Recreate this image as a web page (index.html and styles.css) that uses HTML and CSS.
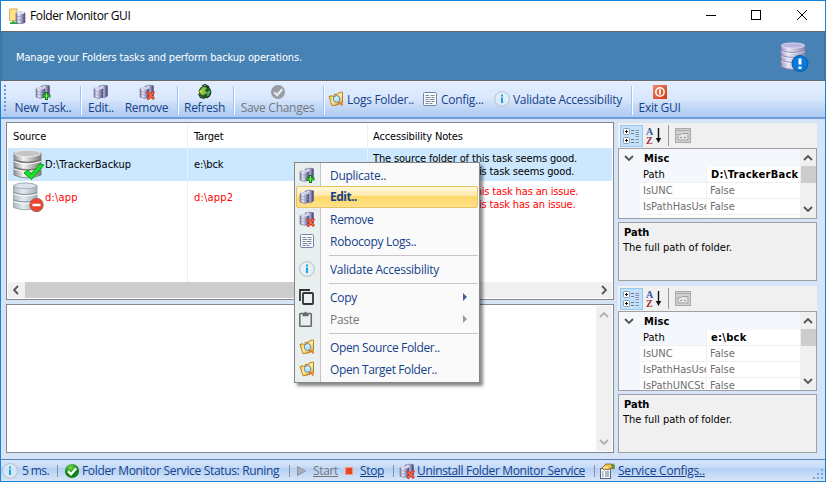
FILE: index.html
```html
<!DOCTYPE html>
<html lang="en">
<head>
<meta charset="utf-8">
<title>Folder Monitor GUI</title>
<link rel="stylesheet" href="styles.css">
</head>
<body>
<svg class="defs" width="0" height="0" aria-hidden="true">
  <defs>
    <linearGradient id="cyl" x1="0" x2="1" y1="0" y2="0"><stop offset="0" stop-color="#77779f"/><stop offset=".3" stop-color="#eeeefa"/><stop offset=".65" stop-color="#9999c0"/><stop offset="1" stop-color="#36366b"/></linearGradient>
    <linearGradient id="lilac" x1="0" x2="1" y1="0" y2="0"><stop offset="0" stop-color="#9c97bd"/><stop offset=".3" stop-color="#e9e6f8"/><stop offset="1" stop-color="#8985b0"/></linearGradient>
    <linearGradient id="grey" x1="0" x2="1" y1="0" y2="0"><stop offset="0" stop-color="#909090"/><stop offset=".35" stop-color="#f2f2f2"/><stop offset="1" stop-color="#7c7c7c"/></linearGradient>
    <linearGradient id="pale" x1="0" x2="1" y1="0" y2="0"><stop offset="0" stop-color="#b0bac4"/><stop offset=".4" stop-color="#e4eaf0"/><stop offset="1" stop-color="#a5b0bc"/></linearGradient>
    <radialGradient id="green" cx=".4" cy=".25"><stop offset="0" stop-color="#72d84c"/><stop offset="1" stop-color="#128016"/></radialGradient>
    <linearGradient id="red" x1="0" x2="1" y1="0" y2="1"><stop offset="0" stop-color="#f08a68"/><stop offset="1" stop-color="#d43309"/></linearGradient>
    <linearGradient id="gold" x1="0" x2="1" y1="0" y2="1"><stop offset="0" stop-color="#f0bd3c"/><stop offset=".5" stop-color="#ffefa8"/><stop offset="1" stop-color="#dca02a"/></linearGradient>
  </defs>
  <symbol id="db" viewBox="0 0 16 16">
    <path d="M6 2.2Q10 .4 14.5 1.8V12Q12 14.5 8 13.5Z" fill="url(#cyl)" stroke="#62628c" stroke-width=".6"/>
    <path d="M1 4.4Q5.5 2.6 10 4.4V13Q5.5 15.8 1 13Z" fill="url(#cyl)" stroke="#6c6c96" stroke-width=".6"/>
    <ellipse cx="5.5" cy="4.3" rx="4.3" ry="1.2" fill="#d5d5ec"/>
    <path d="M1.2 7.3Q5.5 9 9.8 7.3M1.2 10.2Q5.5 12 9.8 10.2" fill="none" stroke="#8c8cb4" stroke-width=".6"/>
  </symbol>
  <symbol id="db-add" viewBox="0 0 16 16"><use href="#db"/><path d="M10 8h3v2.5h2.5v3H13V16h-3v-2.5H7.5v-3H10z" fill="#087a08"/><path d="M11.500 9v6M8.500 12h6" stroke="#7cf05c" stroke-width="1.2"/></symbol>
  <symbol id="db-del" viewBox="0 0 16 16"><use href="#db"/><path d="M8 8l7 7M15 7.5L8.5 15.5" stroke="#b92710" stroke-width="2.7"/><path d="M8.4 8.4l6.2 6.2M14.6 8L8.9 15" stroke="#ff6848" stroke-width="1.4"/></symbol>
  <symbol id="info" viewBox="0 0 16 16"><circle cx="8" cy="8" r="7.4" fill="#e8eff5" fill-opacity=".6" stroke="#b3c0ca"/><path d="M7 6.5h2V12H7zM7 3.5h2v2H7z" fill="#12a5ea"/></symbol>
  <symbol id="doc" viewBox="0 0 16 16"><rect x="1.5" y="1.5" width="13" height="13" rx="1" fill="#f8fafe" stroke="#7086a8"/><path d="M3.5 4.5h3.5M8.5 4.5h4M3.5 6.5h5M9.5 6.5h3M3.5 8.5h3M7.5 8.5h5M3.5 10.5h5M9.5 10.5h3M3.5 12.5h3M7.5 12.5h3" stroke="#7d8798"/></symbol>
  <symbol id="search" viewBox="0 0 16 16"><path d="M6 3.500L10 3l1-1.500 3.500-.5V12L7 14z" fill="url(#gold)" stroke="#b07a10" stroke-width=".9"/><path d="M1 5.500l3-.8 1 1 4.500-.7 1 8.500L4 14.800z" fill="url(#gold)" stroke="#b07a10" stroke-width=".9"/><circle cx="8.600" cy="8" r="3.300" fill="#b5e8fb" stroke="#6f87a8"/><path d="M7 7.400q.8-1.600 2.400-1.300" stroke="#fff" fill="none"/><path d="M11.200 10.800l3.300 3.700" stroke="#e6762c" stroke-width="1.800"/></symbol>
  <symbol id="check" viewBox="0 0 16 16"><circle cx="8" cy="8" r="7.1" fill="url(#green)"/><path d="M4 8.2l3 3 5.2-6" fill="none" stroke="#fff" stroke-width="2.3"/></symbol>
  <symbol id="check-off" viewBox="0 0 16 16"><circle cx="8" cy="8" r="7" fill="#999ca0"/><path d="M4.2 8.2l3 3 5-6" fill="none" stroke="#e8edf5" stroke-width="2.2"/></symbol>
  <symbol id="globe" viewBox="0 0 16 16"><circle cx="8" cy="8" r="6.2" fill="#26521e"/><path d="M3 6l3-3 4 .5-2 3 2 2-4 3-3-2z" fill="#7fc94a"/><path d="M9 9l4-3 .5 4-3 3z" fill="#4f9c55"/><path d="M5 1.8L8 .5l3.5 2-2 1M14 8l-1.5 4-3 2M1.5 10l2 3.5 4 1" fill="none" stroke="#102d14" stroke-width="1.1"/><path d="M1.5 8l3-2 1 2.5z" fill="#f5cf21"/><path d="M10.5 8.5l2-1 .5 2z" fill="#48bce8"/></symbol>
  <symbol id="power" viewBox="0 0 16 16"><rect x="1" y="1" width="14" height="14" fill="url(#red)"/><circle cx="8" cy="8" r="4.2" fill="none" stroke="#fff" stroke-width="1.5"/><path d="M8 5.3v5.2" stroke="#fff" stroke-width="1.7"/></symbol>
  <symbol id="copy" viewBox="0 0 16 16"><path d="M1 12V1h10" fill="none" stroke="#303236" stroke-width="1.8"/><rect x="4" y="4" width="10" height="11" rx=".8" fill="none" stroke="#303236" stroke-width="1.8"/></symbol>
  <symbol id="paste" viewBox="0 0 16 16"><rect x=".8" y="2.500" width="11.500" height="12.700" rx=".8" fill="none" stroke="#66696b" stroke-width="1.500"/><path d="M3.500 2h1.700q1.300-3 2.600 0h1.700v3.200h-6z" fill="#66696b"/></symbol>
  <symbol id="svc" viewBox="0 0 18 16"><rect x="1.5" y="5.5" width="10" height="10" fill="#f6f8fb" stroke="#53677d"/><path d="M3 9h1.5M6 9h4M3 11h1.5M6 11h4M3 13h1.5M6 13h4" stroke="#6d7b8c"/><path d="M3 5l4-4h5l3 2v3l-3-1-3 2-2-1-2 1z" fill="#f0c04e" stroke="#765223" stroke-width=".8"/><path d="M12 1.5l3-1 1 3.500-3 1.500z" fill="#5e9238"/><path d="M4 4.5h5" stroke="#fff2a8" stroke-width="1.2"/></symbol>
  <symbol id="chev" viewBox="0 0 10 6"><path d="M1 1l4 4 4-4" fill="none" stroke="#555" stroke-width="1.8"/></symbol>
  <symbol id="categorized" viewBox="0 0 17 16"><rect x=".5" y=".5" width="6" height="6" rx="1" fill="#fff" stroke="#8c9bb0"/><rect x=".5" y="9.500" width="6" height="6" rx="1" fill="#fff" stroke="#8c9bb0"/><path d="M2 3.500h3M3.500 2v3M2 12.500h3M3.500 11v3" stroke="#111"/><path d="M8 2.500h3M8 5.500h3M8 11.500h3M8 14.500h3" stroke="#60799b"/><path d="M12.500 2.500h3.500M12.500 4.500h3.500M12.500 6.500h3.500M12.500 8.500h3.500M12.500 11.500h3.500M12.500 14.500h3.500" stroke="#7f93ae"/></symbol>
  <symbol id="property-pages" viewBox="0 0 16 15"><rect x=".5" y=".5" width="15" height="14" fill="#d0d0d0" stroke="#a9a9a9"/><path d="M1 2.500h14" stroke="#aaa"/><path d="M3 12V6.500h3l1-1h6V12z" fill="#e4e4e4" stroke="#a3a3a3"/><path d="M5 9.500h2M9 9.500h2" stroke="#999"/></symbol>
</svg>

<div class="window">
  <header class="titlebar">
    <svg class="app-icon" viewBox="0 0 17 17"><path d="M.6 1.2L8 .8V12.6H.6z" fill="#ffe18a" stroke="#d9b251"/><path d="M4.5 13v2M1 15.2h8" stroke="#2aa33c" stroke-width="1.7"/><path d="M7 4.8Q11.5 3 16 4.8V14.5Q11.5 17 7 14.5z" fill="url(#cyl)" stroke="#606088" stroke-width=".7"/><ellipse cx="11.5" cy="4.9" rx="4.2" ry="1.2" fill="#dfdff2"/><path d="M7 8q4.500 2 9 0M7 11.200q4.500 2 9 0" fill="none" stroke="#8585aa" stroke-width=".7"/></svg>
    <span class="ui">Folder Monitor GUI</span>
    <svg class="controls" viewBox="0 0 104 12" fill="none" stroke="#000" shape-rendering="crispEdges"><path d="M0 5.500h10"/><rect x="45.500" y=".5" width="9" height="9"/><path d="M91 0l10 10M101 0L91 10" shape-rendering="auto"/></svg>
  </header>

  <section class="banner">
    <span class="tah">Manage your Folders tasks and perform backup operations.</span>
    <svg class="banner-icon" viewBox="0 0 30 32"><path d="M2 4Q14 0 26 4V26Q14 31 2 26z" fill="url(#lilac)" stroke="#77749d" stroke-width=".8"/><ellipse cx="14" cy="4.500" rx="11.700" ry="2.600" fill="#b9b5df" stroke="#e6e3f7" stroke-width=".8"/><path d="M2 9.500q12 4 24 0M2 14.500q12 4 24 0M2 19.500q12 4 24 0" fill="none" stroke="#8f8bb3"/><path d="M2 10.500q12 4 24 0M2 15.500q12 4 24 0M2 20.500q12 4 24 0" fill="none" stroke="#fff" stroke-opacity=".7" stroke-width=".7"/><circle cx="21" cy="22.500" r="8" fill="#0878dc" stroke="#075ba8"/><path d="M21 17.500v6M21 25.500v2.500" stroke="#fff" stroke-width="3"/></svg>
  </section>

  <nav class="toolbar">
    <i class="grip"></i>
    <div class="tool stacked w-new"><svg><use href="#db-add"/></svg><span class="ui">New Task..</span></div><i class="rule"></i>
    <div class="tool stacked w-edit"><svg><use href="#db"/></svg><span class="ui">Edit..</span></div>
    <div class="tool stacked w-remove"><svg><use href="#db-del"/></svg><span class="ui">Remove</span></div><i class="rule"></i>
    <div class="tool stacked w-refresh"><svg><use href="#globe"/></svg><span class="ui">Refresh</span></div><i class="rule"></i>
    <div class="tool stacked w-save off"><svg><use href="#check-off"/></svg><span class="ui">Save Changes</span></div><i class="rule"></i>
    <div class="tool w-logs"><svg><use href="#search"/></svg><span class="ui">Logs Folder..</span></div>
    <div class="tool w-config"><svg><use href="#doc"/></svg><span class="ui">Config...</span></div>
    <div class="tool w-validate"><svg><use href="#info"/></svg><span class="ui">Validate Accessibility</span></div><i class="rule"></i>
    <div class="tool stacked w-exit"><svg><use href="#power"/></svg><span class="ui">Exit GUI</span></div>
  </nav>

  <main class="content">
    <div class="left">
      <section class="tasks">
        <div class="row head tah"><span>Source</span><span>Target</span><span>Accessibility Notes</span></div>
        <div class="row selected tah">
          <span class="source"><svg class="disk" viewBox="0 0 32 32"><path d="M1 4Q14 -1 28 4V26Q14 32 1 26z" fill="url(#grey)" stroke="#777" stroke-width=".8"/><ellipse cx="14.500" cy="4.500" rx="13" ry="3.300" fill="#c5c5c5" stroke="#eee"/><path d="M1 11q13 5 27 0M1 18.500q13 5 27 0" fill="none" stroke="#777" stroke-width="1.400"/><path d="M1 12.500q13 5 27 0M1 20q13 5 27 0" fill="none" stroke="#fff"/><path d="M11 24l4-3 3 4 9-10 4 1-12.500 14.500z" fill="#19e22b" stroke="#099b19"/></svg><span class="task">D:\TrackerBackup</span></span>
          <span>e:\bck</span>
          <span class="notes"><span>The source folder of this task seems good.</span><span>The target folder of this task seems good.</span></span>
        </div>
        <div class="row failed tah">
          <span class="source"><svg class="disk" viewBox="0 0 32 32"><path d="M.500 3.500Q12 -1 24 3.500V25.500Q12 30 .500 25.500z" fill="url(#pale)" stroke="#8f9aa5" stroke-width=".8"/><ellipse cx="12.200" cy="3.800" rx="11" ry="2.800" fill="#dce4eb" stroke="#a5b0bb"/><path d="M.500 10.500q12 4 23.500 0M.500 18q12 4 23.500 0" fill="none" stroke="#85919d"/><path d="M.500 12q12 4 23.500 0M.500 19.500q12 4 23.500 0" fill="none" stroke="#fff"/><circle cx="23.500" cy="23" r="6.700" fill="#e94432" stroke="#a9645c"/><path d="M19.500 23h8" stroke="#fff" stroke-width="2.500"/></svg><span class="wide">d:\app</span></span>
          <span class="wide">d:\app2</span>
          <span class="notes"><span>The source folder of this task has an issue.</span><span>The target folder of this task has an issue.</span></span>
        </div>
        <div class="row filler"><span></span><span></span><span></span></div>
        <div class="hscroll"><svg class="chev turn-left"><use href="#chev"/></svg><i></i><svg class="chev turn-right"><use href="#chev"/></svg></div>
      </section>
      <section class="log"><div class="vscroll dim"><svg class="chev up"><use href="#chev"/></svg><svg class="chev"><use href="#chev"/></svg></div></section>
    </div>

    <aside class="right">
      <div class="pg-tools">
        <span class="cat"><svg><use href="#categorized"/></svg></span>
        <svg class="az" viewBox="0 0 16 18"><text x="0" y="8" class="az-a">A</text><text x="0" y="16.500" class="az-z">Z</text><path d="M12.500 1v11" stroke="#111" stroke-width="1.400"/><path d="M9.800 11h5.400l-2.700 5z" fill="#111"/></svg>
        <i></i>
        <svg class="pages"><use href="#property-pages"/></svg>
      </div>
      <div class="grid short tah">
        <div class="props">
          <div class="misc"><svg class="chev"><use href="#chev"/></svg><b>Misc</b></div>
          <div class="prop first"><span>Path</span><b>D:\TrackerBack</b></div>
          <div class="prop"><span>IsUNC</span><em>False</em></div>
          <div class="prop"><span>IsPathHasUser</span><em>False</em></div>
          <div class="prop"><span>IsPathUNCSt</span><em>False</em></div>
        </div>
        <div class="vscroll"><svg class="chev up"><use href="#chev"/></svg><i></i><svg class="chev"><use href="#chev"/></svg></div>
      </div>
      <div class="help tah"><b>Path</b><span>The full path of folder.</span></div>
      <div class="pg-tools second">
        <span class="cat"><svg><use href="#categorized"/></svg></span>
        <svg class="az" viewBox="0 0 16 18"><text x="0" y="8" class="az-a">A</text><text x="0" y="16.500" class="az-z">Z</text><path d="M12.500 1v11" stroke="#111" stroke-width="1.400"/><path d="M9.800 11h5.400l-2.700 5z" fill="#111"/></svg>
        <i></i>
        <svg class="pages"><use href="#property-pages"/></svg>
      </div>
      <div class="grid tall tah">
        <div class="props">
          <div class="misc"><svg class="chev"><use href="#chev"/></svg><b>Misc</b></div>
          <div class="prop first"><span>Path</span><b>e:\bck</b></div>
          <div class="prop"><span>IsUNC</span><em>False</em></div>
          <div class="prop"><span>IsPathHasUser</span><em>False</em></div>
          <div class="prop"><span>IsPathUNCSt</span><em>False</em></div>
        </div>
        <div class="vscroll"><svg class="chev up"><use href="#chev"/></svg><i></i><svg class="chev"><use href="#chev"/></svg></div>
      </div>
      <div class="help tah"><b>Path</b><span>The full path of folder.</span></div>
    </aside>
  </main>

  <footer class="status">
    <svg class="i16"><use href="#info"/></svg><span class="ui st-ms">5 ms.</span><i class="bar b1"></i>
    <svg class="i16"><use href="#check"/></svg><span class="ui st-run">Folder Monitor Service Status: Runing</span><i class="bar b2"></i>
    <svg class="play" viewBox="0 0 9 10"><path d="M.500 .500l8 4.500-8 4.500z" fill="#a9adb5" stroke="#8d939e"/></svg><span class="ui link off st-start">Start</span>
    <i class="stop"></i><span class="ui link st-stop">Stop</span><i class="bar b3"></i>
    <svg class="i16 un"><use href="#db-del"/></svg><span class="ui link st-un">Uninstall Folder Monitor Service</span><i class="bar b4"></i>
    <svg class="svc"><use href="#svc"/></svg><span class="ui link st-conf">Service Configs..</span>
    <svg class="resize" viewBox="0 0 12 12"><path d="M9 1h2v2H9zM5 5h2v2H5zM9 5h2v2H9zM1 9h2v2H1zM5 9h2v2H5zM9 9h2v2H9z" fill="#7fa5dd"/></svg>
  </footer>

  <div class="menu">
    <div class="item"><svg><use href="#db-add"/></svg><span class="ui">Duplicate..</span></div>
    <div class="item hot"><svg><use href="#db"/></svg><span class="ui">Edit..</span></div>
    <div class="item"><svg><use href="#db-del"/></svg><span class="ui">Remove</span></div>
    <div class="item"><svg><use href="#doc"/></svg><span class="ui">Robocopy Logs..</span></div>
    <div class="sep"></div>
    <div class="item"><svg><use href="#info"/></svg><span class="ui">Validate Accessibility</span></div>
    <div class="sep"></div>
    <div class="item"><svg><use href="#copy"/></svg><span class="ui">Copy</span><i class="sub"></i></div>
    <div class="item off"><svg><use href="#paste"/></svg><span class="ui">Paste</span><i class="sub"></i></div>
    <div class="sep"></div>
    <div class="item"><svg><use href="#search"/></svg><span class="ui tight">Open Source Folder..</span></div>
    <div class="item"><svg><use href="#search"/></svg><span class="ui tight">Open Target Folder..</span></div>
  </div>
</div>
</body>
</html>
```
FILE: styles.css
```css
* { box-sizing: border-box; }
html, body { margin: 0; height: 100%; overflow: hidden; }
svg { display: block; flex: none; }
.defs { position: absolute; }
i { display: block; flex: none; }
em { font-style: normal; }
.ui { font: 12px/16px "Open Sans", "Noto Sans", sans-serif; letter-spacing: -.28px; color: #15428b; white-space: nowrap; }
.tah { font: 11px/13px "DejaVu Sans Condensed", "DejaVu Sans", sans-serif; font-stretch: condensed; letter-spacing: -.15px; color: #000; white-space: nowrap; }
.wide { letter-spacing: .2px; }
.task { letter-spacing: 0; }

.window { position: relative; width: 826px; height: 482px; border: 1px solid #1883d7; background: #d7e4f8; display: flex; flex-direction: column; }
.titlebar { height: 30px; flex: none; background: #fff; display: flex; align-items: center; padding: 0 15px 0 8px; }
.app-icon { width: 17px; height: 17px; margin-right: 4px; }
.titlebar .ui { color: #000; letter-spacing: -.38px; }
.controls { width: 104px; height: 12px; margin-left: auto; }
.banner { height: 50px; flex: none; background: #4682b4; border: 1px solid #696969; display: flex; align-items: center; justify-content: space-between; padding: 1px 15px 0 14px; }
.banner .tah { color: #fff; letter-spacing: -.16px; padding-top: 2px; }
.banner-icon { width: 30px; height: 32px; }

.toolbar { height: 38px; flex: none; display: flex; padding: 0 0 0 3px; background: linear-gradient(#e3efff, #d9e7fd 50%, #cbdef8 62%, #b0ccf2 95%); border-bottom: 2px solid #6f9ddb; }
.grip { width: 2px; height: 27px; margin-top: 4px; background: repeating-linear-gradient(#7097d3 0 2px, transparent 2px 4px); }
.rule { width: 2px; height: 29px; margin-top: 5px; background: linear-gradient(90deg, #9ac6ff 50%, #fff 50%); }
.tool { display: flex; align-items: center; height: 36px; }
.tool svg { width: 16px; height: 16px; }
.tool.stacked { flex-direction: column; padding-top: 3px; }
.tool:not(.stacked) { gap: 3px; }
.tool:not(.stacked) .ui { padding-top: 2px; }
.off .ui, .ui.off { color: #75777b; }
.w-new { width: 74px; }
.w-edit { width: 38px; }
.w-remove { width: 53px; margin-right: 4px; }
.w-refresh { width: 51px; margin-right: 3px; }
.w-save { width: 85px; margin-right: 3px; }
.w-logs { width: 97px; padding-left: 3px; }
.w-config { width: 72px; }
.w-validate { width: 137px; }
.w-exit { width: 53px; }

.content { flex: 1; min-height: 0; display: flex; padding: 3px 8px 0 5px; gap: 4px; }
.left { width: 608px; display: flex; flex-direction: column; gap: 4px; }
.tasks { height: 178px; border: 1px solid #828790; background: #fff; padding: 1px; display: flex; flex-direction: column; }
.row { display: grid; grid-template-columns: 180px 180px 1fr; flex: none; }
.row > span { display: flex; align-items: center; padding-left: 5px; border-right: 1px solid #e5f0fa; }
.row > span:nth-child(2) { padding-left: 6px; }
.row > span:last-child { border: 0; }
.head { height: 24px; }
.selected { height: 33px; background: #cce8ff; }
.failed { height: 33px; color: #f00; }
.row .notes { flex-direction: column; align-items: flex-start; justify-content: center; }
.disk { width: 32px; height: 32px; }
.filler { flex: 1; }
.hscroll { height: 16px; background: #f0f0f0; display: flex; align-items: center; justify-content: space-between; padding: 0 3px; }
.hscroll i { width: 330px; height: 16px; background: #cdcdcd; margin-right: auto; margin-left: 4px; }
.chev { width: 10px; height: 6px; }
.turn-left { transform: rotate(90deg); }
.turn-right { transform: rotate(-90deg); }
.up { transform: rotate(180deg); }
.log { height: 149px; border: 1px solid #828790; background: #fff; display: flex; justify-content: flex-end; padding: 1px; }
.vscroll { width: 16px; background: #f0f0f0; display: flex; flex-direction: column; align-items: center; padding: 6px 0; justify-content: space-between; }
.vscroll i { width: 15px; height: 17px; background: #cdcdcd; margin: 5px 0 auto; }
.dim .chev { opacity: .4; }

.right { width: 199px; display: flex; flex-direction: column; }
.pg-tools { height: 25px; margin-top: 1px; background: #f0f0f0; display: flex; align-items: center; padding-left: 2px; flex: none; }
.pg-tools.second { margin-top: 5px; }
.cat { width: 23px; height: 22px; border: 1px solid #90c8f6; background: #c5e0f7; padding: 2px; }
.cat svg { width: 17px; height: 16px; }
.az { width: 16px; height: 18px; margin-left: 3px; }
.az text { font: bold 10px "Liberation Serif", serif; letter-spacing: 0; }
.az-a { fill: #3455a5; }
.az-z { fill: #a52b3c; }
.pg-tools > i { width: 1px; height: 21px; background: #999; margin: 0 6px; }
.pages { width: 16px; height: 15px; }
.grid { border: 1px solid #a0a0a0; background: #fff; display: flex; flex: none; letter-spacing: 0; }
.short { height: 71px; }
.tall { height: 80px; }
.props { width: 181px; overflow: hidden; background: #f4f7fc; }
.misc { height: 18px; display: flex; align-items: center; padding-left: 5px; }
.misc b { margin-left: 10px; letter-spacing: .15px; }
.prop { height: 16px; display: grid; grid-template-columns: 67px 1fr; margin-left: 21px; background: #fff; border-bottom: 1px solid #f0f0f0; color: #6d6d6d; line-height: 15px; }
.prop > * { overflow: hidden; padding-left: 3px; }
.prop span { border-right: 1px solid #f0f0f0; }
.prop b { letter-spacing: .3px; padding-left: 4px; }
.first { color: #000; }
.first span { background: #f4f7fc; }
.help { height: 59px; margin-top: 3px; border: 1px solid #a0a0a0; background: #f0f0f0; padding: 3px 4px; display: flex; flex-direction: column; gap: 2px; flex: none; letter-spacing: 0; }
.help b { padding-left: 1px; }

.status { height: 22px; flex: none; border-top: 1px solid #5a82bd; background: linear-gradient(#d7e6f9, #c7dcf8 35%, #b3d0f5 40%, #d7e5f7); display: flex; align-items: center; padding-left: 1px; }
.status .ui { letter-spacing: -.33px; }
.i16 { width: 16px; height: 16px; }
.bar { width: 1px; height: 12px; background: #8e8f98; }
.link { text-decoration: underline; }
.status .st-ms { width: 35px; margin-left: 4px; letter-spacing: -.6px; }
.b1 { margin-right: 6px; }
.status .st-run { width: 202px; margin-left: 2px; }
.b2 { margin: 0 7px 0 5px; }
.play { width: 9px; height: 10px; }
.status .st-start { width: 25px; margin-left: 7px; }
.stop { width: 8px; height: 8px; background: #e34725; border: 1px solid #ff9577; margin-left: 7px; }
.status .st-stop { width: 25px; margin-left: 7px; }
.b3 { margin: 0 5px 0 8px; }
.status .st-un { width: 168px; margin-left: 2px; }
.b4 { margin: 0 4px 0 9px; }
.svc { width: 18px; height: 16px; }
.status .st-conf { margin-left: 1px; letter-spacing: -.22px; }
.resize { width: 12px; height: 12px; margin: 6px 1px 0 auto; }

.menu { position: absolute; left: 293px; top: 161px; width: 186px; height: 221px; border: 1px solid #868686; background: linear-gradient(90deg, #e9eeee 25px, #c5c5c5 25px 26px, #fafafa 26px); padding: 1px; box-shadow: 3px 3px 3px #0007; }
.item { height: 22px; display: flex; align-items: center; padding-left: 3px; }
.item svg { width: 16px; height: 16px; }
.item .ui { margin-left: 15px; padding-top: 1px; }
.item .tight { letter-spacing: -.37px; }
.hot { border: 1px solid #e5c365; border-radius: 2px; padding-left: 2px; background: linear-gradient(#fff8df, #ffe8a6 45%, #ffd767 48%, #ffe18a); }
.hot .ui { font-weight: 700; letter-spacing: -.5px; padding-top: 0; }
.sub { border: 4px solid transparent; border-left: 4px solid #4560a8; border-right: 0; margin: 0 11px 0 auto; }
.off .sub { border-left-color: #999; }
.sep { height: 6px; margin-left: 33px; background: linear-gradient(transparent 3px, #c5c5c5 3px 4px, transparent 4px); }
```
